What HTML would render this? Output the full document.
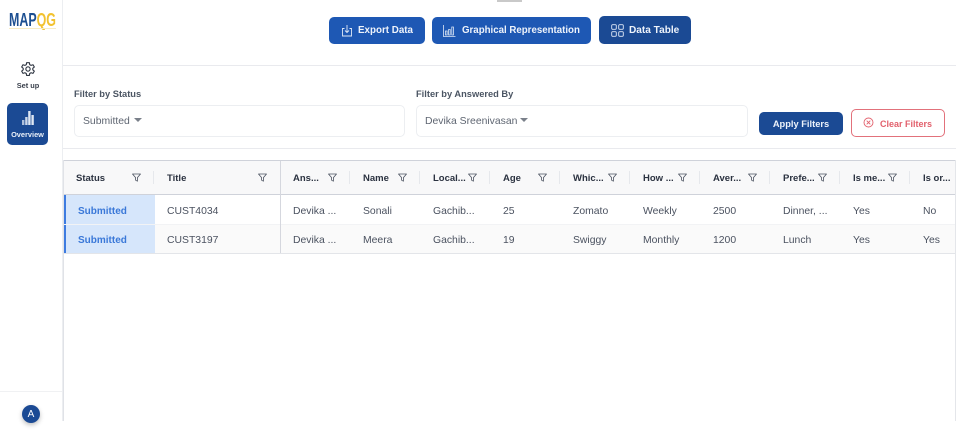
<!DOCTYPE html>
<html><head><meta charset="utf-8">
<style>
html,body{margin:0;padding:0;background:#fff}
body{width:956px;height:434px;position:relative;overflow:hidden;font-family:"Liberation Sans",sans-serif;color:#374151}
.a{position:absolute;white-space:nowrap}
.line{position:absolute;background:#e9eaee}
.btn{position:absolute;border-radius:5px;color:#eef3fb;font-weight:700;font-size:9.8px;line-height:28px;box-sizing:border-box;white-space:nowrap}
.btn svg{position:absolute;top:6.5px}
.box{position:absolute;box-sizing:border-box;background:#fff;border:1px solid #eceef1;border-radius:5px}
.lbl{position:absolute;font-size:9.3px;font-weight:700;color:#4b5563;white-space:nowrap}
.val{position:absolute;font-size:10.4px;color:#5f6672;white-space:nowrap}
.caret{position:absolute;width:0;height:0;border-left:4px solid transparent;border-right:4px solid transparent;border-top:4.5px solid #7a808a}
.h{position:absolute;top:173px;font-size:9.5px;line-height:12px;font-weight:700;color:#2b3240;white-space:nowrap}
.c{position:absolute;font-size:10.4px;line-height:13px;color:#4b5260;white-space:nowrap}
.sep{position:absolute;top:171px;width:1px;height:13px;background:#e6e8ec}
.f{position:absolute;top:173px;width:9px;height:9px}
</style></head><body>

<!-- sidebar -->
<div class="line" style="left:62px;top:0;width:1px;height:421px;background:#eceef1"></div>
<div class="line" style="left:0;top:391px;width:62px;height:1px;background:#f0f1f3"></div>
<div class="a" style="left:9px;top:10px;font-size:18px;line-height:20px;font-weight:700;color:#1d4f91;transform:scaleX(.69);transform-origin:0 0">MAP<span style="color:#f2c230">QG</span></div>
<div class="line" style="left:9px;top:28px;width:47px;height:1px;background:#f8ecc4"></div>

<svg class="a" style="left:20px;top:61px" width="16" height="16" viewBox="0 0 24 24" fill="none" stroke="#2f3642" stroke-width="1.7" stroke-linejoin="round"><path d="M10 2.5h4l.6 3 2 1.1 2.9-1 2 3.4-2.3 2v2.2l2.3 2-2 3.4-2.9-1-2 1.1-.6 3h-4l-.6-3-2-1.1-2.9 1-2-3.4 2.3-2V11l-2.3-2 2-3.4 2.9 1 2-1.1z"/><circle cx="12" cy="12" r="3.2"/></svg>
<div class="a" style="left:0;width:56px;text-align:center;top:81px;font-size:7.4px;line-height:10px;font-weight:700;color:#3a404c">Set up</div>

<div class="a" style="left:7px;top:103px;width:41px;height:42px;background:#1b4a94;border-radius:5px"></div>
<svg class="a" style="left:21px;top:110px" width="14" height="16" viewBox="0 0 14 16" fill="#dfe7f3"><rect x="1" y="10" width="2.4" height="5" opacity=".75"/><rect x="4.2" y="7" width="2.4" height="8" opacity=".9"/><rect x="7.2" y="1" width="2.4" height="14"/><rect x="10.4" y="5" width="2.4" height="10"/></svg>
<div class="a" style="left:7px;width:41px;text-align:center;top:130px;font-size:7.4px;line-height:10px;font-weight:700;color:#eaf0f8">Overview</div>

<div class="a" style="left:22px;top:405px;width:18px;height:18px;border-radius:50%;background:#1b4a94;color:#fff;font-size:10px;line-height:19px;text-align:center;box-shadow:0 2px 5px rgba(0,0,0,.25)">A</div>

<!-- top stub -->
<div class="a" style="left:497px;top:0;width:25px;height:2px;background:#c9c9c9"></div>

<!-- top buttons -->
<div class="btn" style="left:329px;top:17px;width:96px;height:27px;background:#1e58b4;padding-left:29px">Export Data
<svg style="left:12px" width="12" height="13" viewBox="0 0 12 13" fill="none" stroke="#dfe8f6" stroke-width=".9"><path d="M3.5 4.5H1.5v7.5h9V4.5H8.5M6 1v7.5M4 6.5l2 2 2-2"/></svg></div>
<div class="btn" style="left:432px;top:17px;width:159px;height:27px;background:#1e58b4;padding-left:30px;font-size:9.7px">Graphical Representation
<svg style="left:11px" width="13" height="13" viewBox="0 0 13 13" fill="none" stroke="#dfe8f6" stroke-width=".8"><path d="M.5 1v11.5h12M2.5 7h1.6v4H2.5zM5.6 5.5h1.6V11H5.6zM8.8 3h1.6v8H8.8z"/></svg></div>
<div class="btn" style="left:599px;top:16px;width:92px;height:28px;background:#1b4a94;line-height:29px;padding-left:30px;font-size:10.1px">Data Table
<svg style="left:12px;top:7.5px" width="13" height="13" viewBox="0 0 13 13" fill="none" stroke="#dfe8f6" stroke-width=".9"><rect x=".7" y=".7" width="4.6" height="4.6" rx="1"/><rect x="7.7" y=".7" width="4.6" height="4.6" rx="1"/><rect x=".7" y="7.7" width="4.6" height="4.6" rx="1"/><rect x="7.7" y="7.7" width="4.6" height="4.6" rx="1"/></svg></div>

<div class="line" style="left:63px;top:65px;width:893px;height:1px"></div>

<!-- filters -->
<div class="lbl" style="left:74px;top:89px">Filter by Status</div>
<div class="box" style="left:74px;top:105px;width:331px;height:32px"></div>
<div class="val" style="left:83px;top:116px">Submitted</div>
<div class="caret" style="left:134px;top:118px"></div>

<div class="lbl" style="left:416px;top:89px">Filter by Answered By</div>
<div class="box" style="left:416px;top:105px;width:332px;height:32px"></div>
<div class="val" style="left:425px;top:116px">Devika Sreenivasan</div>
<div class="caret" style="left:520px;top:118px"></div>

<div class="btn" style="left:759px;top:112px;width:84px;height:23px;background:#1b4a94;line-height:24px;text-align:center;font-size:9.3px">Apply Filters</div>
<div class="a" style="left:851px;top:109px;width:94px;height:28px;box-sizing:border-box;border:1px solid #e2717b;border-radius:5px;background:#fff"></div>
<svg class="a" style="left:863px;top:117px" width="11" height="11" viewBox="0 0 11 11" fill="none" stroke="#e2606c" stroke-width=".9"><circle cx="5.5" cy="5.5" r="4.5"/><path d="M3.7 3.7l3.6 3.6M7.3 3.7l-3.6 3.6"/></svg>
<div class="a" style="left:880px;top:117.5px;font-size:9px;line-height:12px;font-weight:700;color:#e2606c">Clear Filters</div>

<div class="line" style="left:63px;top:148px;width:893px;height:1px"></div>

<!-- table -->
<div class="a" style="left:63px;top:160px;width:893px;height:1px;background:#cfd2da"></div>
<div class="a" style="left:63px;top:161px;width:893px;height:33px;background:#f8f8f9"></div>
<div class="a" style="left:63px;top:194px;width:893px;height:1px;background:#cfd2da"></div>
<div class="a" style="left:63px;top:160px;width:1px;height:261px;background:#e0e2e7"></div>
<div class="a" style="left:955px;top:160px;width:1px;height:261px;background:#e4e6ea"></div>
<div class="a" style="left:64px;top:225px;width:891px;height:28px;background:#fafafa"></div>
<div class="a" style="left:64px;top:224px;width:891px;height:1px;background:#f2f3f5"></div>
<div class="a" style="left:64px;top:253px;width:891px;height:1px;background:#e3e5e9"></div>
<div class="a" style="left:65px;top:195px;width:90px;height:29px;background:#d6e6fb"></div>
<div class="a" style="left:65px;top:225px;width:90px;height:28px;background:#d6e6fb"></div>
<div class="a" style="left:64px;top:195px;width:2px;height:29px;background:#3d7be0"></div>
<div class="a" style="left:64px;top:225px;width:2px;height:28px;background:#3d7be0"></div>
<div class="a" style="left:280px;top:161px;width:1px;height:92px;background:#d5d7de"></div>

<div class="sep" style="left:153px"></div><div class="sep" style="left:349px"></div><div class="sep" style="left:419px"></div><div class="sep" style="left:489px"></div><div class="sep" style="left:559px"></div><div class="sep" style="left:629px"></div><div class="sep" style="left:699px"></div><div class="sep" style="left:769px"></div><div class="sep" style="left:839px"></div><div class="sep" style="left:909px"></div>

<div class="h" style="left:76px">Status</div>
<div class="h" style="left:167px">Title</div>
<div class="h" style="left:293px">Ans...</div>
<div class="h" style="left:363px">Name</div>
<div class="h" style="left:433px">Local...</div>
<div class="h" style="left:503px">Age</div>
<div class="h" style="left:573px">Whic...</div>
<div class="h" style="left:643px">How ...</div>
<div class="h" style="left:713px">Aver...</div>
<div class="h" style="left:783px">Prefe...</div>
<div class="h" style="left:853px">Is me...</div>
<div class="h" style="left:923px">Is or...</div>

<svg width="0" height="0" style="position:absolute"><defs><g id="fi"><path d="M.5 1h8L5.4 4.6v3.6L3.6 7.2V4.6z" fill="none" stroke="#4b5260" stroke-width=".8" stroke-linejoin="round"/></g></defs></svg>
<svg class="f" style="left:132px" viewBox="0 0 9 9"><use href="#fi"/></svg>
<svg class="f" style="left:258px" viewBox="0 0 9 9"><use href="#fi"/></svg>
<svg class="f" style="left:328px" viewBox="0 0 9 9"><use href="#fi"/></svg>
<svg class="f" style="left:398px" viewBox="0 0 9 9"><use href="#fi"/></svg>
<svg class="f" style="left:468px" viewBox="0 0 9 9"><use href="#fi"/></svg>
<svg class="f" style="left:538px" viewBox="0 0 9 9"><use href="#fi"/></svg>
<svg class="f" style="left:608px" viewBox="0 0 9 9"><use href="#fi"/></svg>
<svg class="f" style="left:678px" viewBox="0 0 9 9"><use href="#fi"/></svg>
<svg class="f" style="left:748px" viewBox="0 0 9 9"><use href="#fi"/></svg>
<svg class="f" style="left:818px" viewBox="0 0 9 9"><use href="#fi"/></svg>
<svg class="f" style="left:888px" viewBox="0 0 9 9"><use href="#fi"/></svg>

<!-- row 1 -->
<div class="c" style="left:78px;top:205px;font-weight:700;color:#3a78d8;font-size:10px">Submitted</div>
<div class="c" style="left:167px;top:205px">CUST4034</div>
<div class="c" style="left:293px;top:205px">Devika ...</div>
<div class="c" style="left:363px;top:205px">Sonali</div>
<div class="c" style="left:433px;top:205px">Gachib...</div>
<div class="c" style="left:503px;top:205px">25</div>
<div class="c" style="left:573px;top:205px">Zomato</div>
<div class="c" style="left:643px;top:205px">Weekly</div>
<div class="c" style="left:713px;top:205px">2500</div>
<div class="c" style="left:783px;top:205px">Dinner, ...</div>
<div class="c" style="left:853px;top:205px">Yes</div>
<div class="c" style="left:923px;top:205px">No</div>
<!-- row 2 -->
<div class="c" style="left:78px;top:234px;font-weight:700;color:#3a78d8;font-size:10px">Submitted</div>
<div class="c" style="left:167px;top:234px">CUST3197</div>
<div class="c" style="left:293px;top:234px">Devika ...</div>
<div class="c" style="left:363px;top:234px">Meera</div>
<div class="c" style="left:433px;top:234px">Gachib...</div>
<div class="c" style="left:503px;top:234px">19</div>
<div class="c" style="left:573px;top:234px">Swiggy</div>
<div class="c" style="left:643px;top:234px">Monthly</div>
<div class="c" style="left:713px;top:234px">1200</div>
<div class="c" style="left:783px;top:234px">Lunch</div>
<div class="c" style="left:853px;top:234px">Yes</div>
<div class="c" style="left:923px;top:234px">Yes</div>

</body></html>
